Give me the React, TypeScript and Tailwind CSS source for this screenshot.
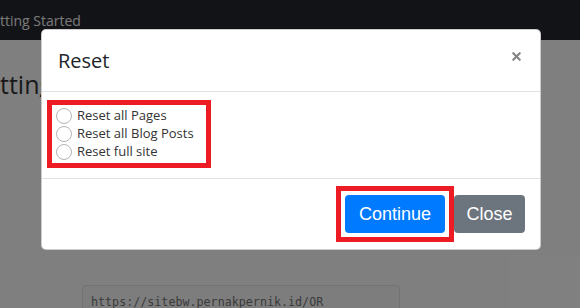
import { X } from 'lucide-react'

const poppins = { fontFamily: '"Open Sans", "Noto Sans", sans-serif' }

export default function App() {
  const options = ['Reset all Pages', 'Reset all Blog Posts', 'Reset full site']

  return (
    <div className="relative h-[308px] w-[580px] overflow-hidden bg-white" style={poppins}>
      {/* page behind the modal */}
      <nav className="flex h-10 items-center bg-[#24262c]">
        <span className="text-[14px] text-[#f2f2f2]">tting Started</span>
      </nav>
      <h1 className="mt-[32px] w-[41px] overflow-hidden whitespace-nowrap text-[25px] leading-none text-[#333]">tting</h1>
      <div className="ml-[82px] mt-[188px] h-[40px] w-[318px] rounded border border-[#e4e4e4] bg-[#fbfbfb] px-2 pt-[2px]">
        <span className="text-[11.7px] text-[#777]" style={{ fontFamily: '"DejaVu Sans Mono", monospace' }}>
          https://sitebw.pernakpernik.id/OR
        </span>
      </div>

      {/* backdrop */}
      <div className="absolute inset-0 bg-black/50" />

      {/* modal */}
      <div className="absolute left-[41px] top-[29px] w-[500px] rounded-[5px] border border-black/20 bg-white">
        <div className="flex h-[62px] items-center justify-between border-b border-[#dee2e6] pl-[16px] pr-[17px]">
          <h2 className="text-[20px] text-[#212529]">Reset</h2>
          <X className="mb-[9px] h-[13px] w-[13px] text-[#858585]" strokeWidth={4} />
        </div>

        <div className="px-[5px] pb-[10px] pt-[8px]">
          <div className="w-[164px] border-[5px] border-[#ed1c24] px-[4px] py-[2px]">
            {options.map((o) => (
              <label key={o} className="flex h-[18px] items-center gap-[5px] text-[13px] text-[#333]">
                <span className="h-[16px] w-[16px] shrink-0 rounded-full border border-[#b5b5b5] bg-white" />
                {o}
              </label>
            ))}
          </div>
        </div>

        <div className="flex justify-end border-t border-[#dee2e6] py-[7px] pr-[15px]" style={{ fontFamily: '"Liberation Sans", Arial, sans-serif' }}>
          <div className="border-[5px] border-[#ed1c24] bg-white p-[4px]">
            <button className="h-[38px] w-[100px] rounded-[4px] bg-[#007bff] text-[18px] text-white">Continue</button>
          </div>
          <div className="py-[9px]">
            <button className="h-[38px] w-[71px] rounded-[4px] bg-[#6c757d] text-[18px] text-white">Close</button>
          </div>
        </div>
      </div>
    </div>
  )
}
